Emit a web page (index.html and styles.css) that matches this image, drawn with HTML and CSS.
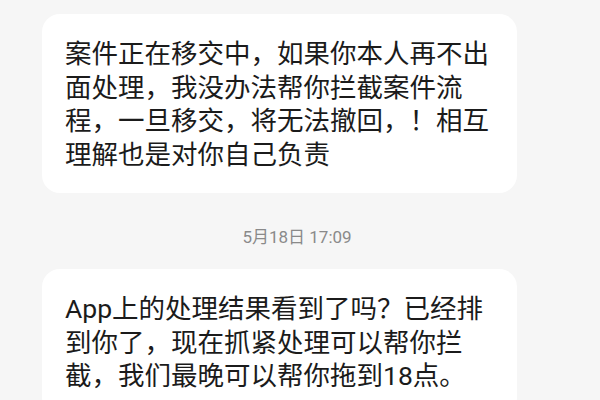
FILE: index.html
```html
<!DOCTYPE html>
<html lang="zh-CN">
<head>
<meta charset="utf-8">
<link rel="stylesheet" href="styles.css">
</head>
<body>
<div class="chat">
  <div class="bubble">案件正在移交中，如果你本人再不出面处理，我没办法帮你拦截案件流程，一旦移交，将无法撤回，！相互理解也是对你自己负责</div>
  <div class="time">5月18日 17:09</div>
  <div class="bubble">App上的处理结果看到了吗？已经排到你了，现在抓紧处理可以帮你拦截，我们最晚可以帮你拖到18点。</div>
</div>
</body>
</html>
```
FILE: styles.css
```css
html, body {
  margin: 0;
  padding: 0;
  background: #f6f6f6;
}
body {
  width: 600px;
  height: 400px;
  overflow: hidden;
  font-family: Roboto, "Noto Sans CJK SC", sans-serif;
}
.chat {
  display: flex;
  flex-direction: column;
  align-items: flex-start;
  padding: 14px 0 0 42px;
}
.bubble {
  box-sizing: border-box;
  width: 475px;
  background: #ffffff;
  border-radius: 18px;
  padding: 23px 23px 22px 23px;
  font-size: 26.5px;
  line-height: 33.5px;
  color: #1b1b1b;
}
.time {
  align-self: stretch;
  margin: 32px 0 20px -42px;
  text-align: center;
  font-size: 17px;
  line-height: 24px;
  color: #8a8a8a;
  padding-right: 6px;
}
```
